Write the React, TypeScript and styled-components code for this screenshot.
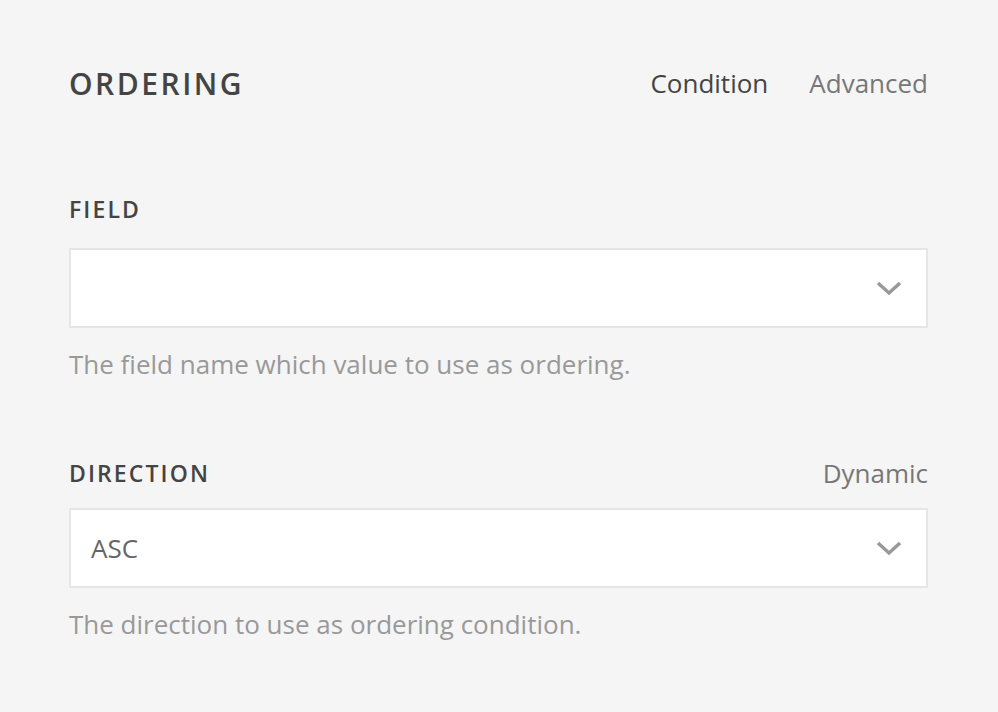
import React from 'react';
import styled, { createGlobalStyle } from 'styled-components';

const GlobalStyle = createGlobalStyle`
  html, body {
    margin: 0;
    padding: 0;
    background: #f5f5f5;
  }
  body {
    font-family: "Open Sans", "Liberation Sans", sans-serif;
  }
`;

const Page = styled.div`
  width: 998px;
  height: 712px;
  box-sizing: border-box;
  padding: 60px 70px 0 69px;
  background: #f5f5f5;
  overflow: hidden;
`;

const Header = styled.div`
  display: flex;
  align-items: center;
  justify-content: space-between;
  height: 46px;
`;

const Title = styled.h1`
  margin: 0;
  font-family: "Open Sans", "Liberation Sans", sans-serif;
  font-size: 30px;
  font-weight: 600;
  letter-spacing: 2.5px;
  color: #444;
`;

const Tabs = styled.div`
  display: flex;
  gap: 41px;
`;

const Tab = styled.span<{ $active?: boolean }>`
  font-size: 26px;
  color: ${p => (p.$active ? '#444' : '#777')};
`;

const Field = styled.div<{ $top: number }>`
  margin-top: ${p => p.$top}px;
`;

const LabelRow = styled.div<{ $gap: number }>`
  display: flex;
  align-items: center;
  justify-content: space-between;
  height: 30px;
  margin-bottom: ${p => p.$gap}px;
`;

const Label = styled.label`
  font-size: 23px;
  font-weight: 600;
  letter-spacing: 2.1px;
  color: #444;
`;

const Aside = styled.span`
  font-size: 26px;
  color: #777;
`;

const Select = styled.div`
  display: flex;
  align-items: center;
  justify-content: space-between;
  height: 80px;
  box-sizing: border-box;
  border: 2px solid #e6e6e6;
  background: #fff;
  padding: 0 24px 0 20px;
`;

const Value = styled.span`
  font-size: 26px;
  color: #666;
`;

const Help = styled.p`
  margin: 19px 0 0;
  font-size: 26px;
  line-height: 34px;
  color: #999;
`;

const Chevron = () => (
  <svg width="26" height="16" viewBox="0 0 26 16">
    <path d="M2 3 L13 13 L24 3" fill="none" stroke="#999" strokeWidth="3.5" />
  </svg>
);

export default function App() {
  return (
    <>
      <GlobalStyle />
      <Page>
        <Header>
          <Title>ORDERING</Title>
          <Tabs>
            <Tab $active>Condition</Tab>
            <Tab>Advanced</Tab>
          </Tabs>
        </Header>

        <Field $top={88}>
          <LabelRow $gap={24}>
            <Label>FIELD</Label>
          </LabelRow>
          <Select>
            <Value />
            <Chevron />
          </Select>
          <Help>The field name which value to use as ordering.</Help>
        </Field>

        <Field $top={77}>
          <LabelRow $gap={20}>
            <Label>DIRECTION</Label>
            <Aside>Dynamic</Aside>
          </LabelRow>
          <Select>
            <Value>ASC</Value>
            <Chevron />
          </Select>
          <Help>The direction to use as ordering condition.</Help>
        </Field>
      </Page>
    </>
  );
}
